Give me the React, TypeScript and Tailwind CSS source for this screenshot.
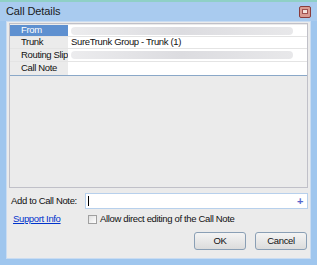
import type { FC } from 'react'

const rows = [
    { label: 'From', value: '', blur: true, selected: true, h: 'h-[12px]' },
    { label: 'Trunk', value: 'SureTrunk Group - Trunk (1)', blur: false, selected: false, h: 'h-[12px]' },
    { label: 'Routing Slip', value: '', blur: true, selected: false, h: 'h-[13px]' },
    { label: 'Call Note', value: '', blur: false, selected: false, h: 'h-[14px]' },
]

const App: FC = () => {
    return (
        <div
            className="w-[317px] h-[265px] bg-[#9fc6ee] flex flex-col text-[9.5px] tracking-[-0.35px] text-[#111] overflow-hidden whitespace-nowrap"
            style={{ fontFamily: '"Liberation Sans", Arial, sans-serif' }}
        >
            {/* top strip */}
            <div className="h-[2px] bg-[#8fd0c6]"></div>
            {/* title bar */}
            <div className="h-[19px] flex items-center justify-between pl-[6px] pr-[6px] bg-[#a9cbef]">
                <span className="text-[11px] tracking-[-0.1px] text-[#1a1a1a]">Call Details</span>
                <div className="w-[12px] h-[12px] rounded-[2px] border border-[#8a3b3b] bg-[#d99a92] flex items-center justify-center">
                    <div className="w-[6px] h-[5px] bg-[#f4e4e0] border border-[#a05050]"></div>
                </div>
            </div>

            {/* body */}
            <div className="flex-1 mx-[6px] mb-[6px] bg-[#ebebeb] border border-[#c9dcf2] flex flex-col px-[2px] pt-[1px]">
                {/* property panel */}
                <div className="h-[165px] border border-[#c0c0c8] bg-[#ebebeb] flex flex-col pt-[1px]">
                    {rows.map((r) => (
                        <div key={r.label} className={`flex ${r.h} shrink-0 border-b border-[#e4e4e4] last:border-b-[#8aa8c8]`}>
                            <div
                                className={`w-[58px] pl-[11px] flex items-center ${r.selected ? 'bg-[#5e90d0] text-white' : 'bg-[#ebebeb]'}`}
                            >
                                {r.label}
                            </div>
                            <div className="flex-1 bg-white pl-[3px] flex items-center">
                                {r.blur ? (
                                    <div className="flex-1 mr-[14px] h-[8px] rounded-[4px] bg-gradient-to-r from-[#ececee] via-[#dcdce0] to-[#e8e8ea]"></div>
                                ) : (
                                    r.value
                                )}
                            </div>
                        </div>
                    ))}
                </div>

                {/* add to call note */}
                <div className="flex items-center mt-[5px] pl-[2px]">
                    <span className="w-[74px]">Add to Call Note:</span>
                    <div className="flex-1 h-[16px] bg-white border border-[#b7d0ec] flex items-center justify-between pl-[2px] pr-[4px]">
                        <div className="w-[1px] h-[10px] bg-black"></div>
                        <span className="text-[#5566cc] text-[11px] font-bold leading-none">+</span>
                    </div>
                </div>

                {/* support info + checkbox */}
                <div className="flex items-center mt-[3px] pl-[4px]">
                    <span className="w-[75px] text-[#0033cc] underline">Support Info</span>
                    <div className="w-[9px] h-[9px] border border-[#a0a0a0] bg-gradient-to-br from-[#e0e0e0] to-white mr-[3px]"></div>
                    <span>Allow direct editing of the Call Note</span>
                </div>

                {/* buttons */}
                <div className="flex justify-end gap-[9px] mt-[6px] pr-[1px]">
                    <button className="w-[52px] h-[18px] rounded-[3px] border border-[#8a9fb5] bg-gradient-to-b from-[#f4f4f4] to-[#dcdcdc] text-[9.5px] tracking-[-0.35px]">
                        OK
                    </button>
                    <button className="w-[52px] h-[18px] rounded-[3px] border border-[#8a9fb5] bg-gradient-to-b from-[#f4f4f4] to-[#dcdcdc] text-[9.5px] tracking-[-0.35px]">
                        Cancel
                    </button>
                </div>
            </div>
        </div>
    )
}

export default App
